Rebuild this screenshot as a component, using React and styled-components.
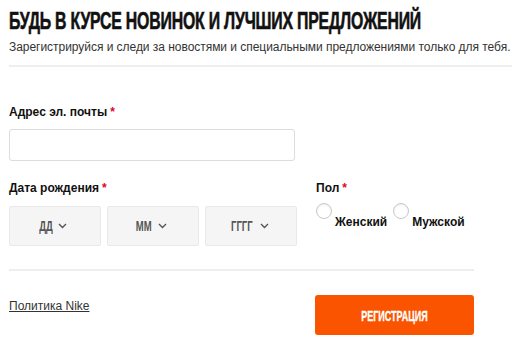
import React from "react";
import styled, { createGlobalStyle } from "styled-components";

const Global = createGlobalStyle`
  html, body { margin: 0; padding: 0; background: #fff; }
  body { font-family: "Liberation Sans", Arial, sans-serif; color: #111; }
  * { box-sizing: border-box; }
`;

const Page = styled.div`
  width: 520px;
  height: 344px;
  padding: 7px 8px 0 9px;
  overflow: hidden;
`;

const Title = styled.h1`
  margin: 0;
  height: 28px;
  font-family: "Liberation Sans", Arial, sans-serif;
  font-weight: 700;
  font-size: 24px;
  line-height: 28px;
  color: #111;
  white-space: nowrap;
  letter-spacing: -0.3px;
  -webkit-text-stroke: 0.6px #111;
`;

const Condensed = styled.span`
  display: inline-block;
  transform: scaleX(${(p) => p.$scale});
  transform-origin: ${(p) => p.$origin || "left center"};
`;

const Subtitle = styled.p`
  margin: 4px 0 0;
  font-size: 12px;
  line-height: 16px;
  color: #333;
  white-space: nowrap;
  letter-spacing: -0.04px;
`;

const Divider = styled.hr`
  border: 0;
  border-top: 2px solid #eeeeee;
  margin: ${(p) => p.$m};
  width: ${(p) => p.$w};
`;

const Label = styled.div`
  font-size: 12px;
  font-weight: 700;
  line-height: 16px;
  color: #111;
  margin-top: ${(p) => p.$mt || "0"};
  margin-bottom: ${(p) => p.$mb || "9px"};
`;

const Star = styled.span`
  color: #e4002b;
  font-weight: 700;
  margin-left: 3px;
`;

const Input = styled.input`
  display: block;
  width: 286px;
  height: 32px;
  border: 1px solid #dcdcdc;
  border-radius: 3px;
  background: #fff;
  outline: none;
`;

const Row = styled.div`
  display: flex;
  margin-top: 19px;
`;

const Col = styled.div`
  width: ${(p) => p.$w};
`;

const Selects = styled.div`
  display: flex;
  gap: 6px;
`;

const Select = styled.div`
  width: 92px;
  height: 40px;
  background: #f5f5f5;
  border: 1px solid #e9e9e9;
  border-radius: 2px;
  display: flex;
  align-items: center;
  justify-content: center;
  gap: 6px;
  color: #555;
  padding-right: 4px;
`;

const SelectText = styled.span`
  font-size: 14px;
  font-weight: 700;
  display: inline-block;
  transform: scaleX(0.68);
  margin: 0 -3px;
`;

const Radios = styled.div`
  display: flex;
  align-items: flex-start;
  gap: 6px;
  padding-top: 7px;
`;

const RadioItem = styled.label`
  display: flex;
  align-items: flex-start;
  gap: 3px;
`;

const Circle = styled.span`
  width: 16px;
  height: 16px;
  border-radius: 50%;
  border: 1px solid #c8c8c8;
  background: #fff;
  box-shadow: inset 0 1px 2px rgba(0, 0, 0, 0.08);
`;

const RadioText = styled.span`
  font-size: 12px;
  font-weight: 700;
  color: #111;
  margin-top: 12px;
  line-height: 14px;
`;

const Footer = styled.div`
  display: flex;
  align-items: flex-start;
  width: 465px;
`;

const Policy = styled.a`
  font-size: 12px;
  color: #333;
  text-decoration: underline;
  margin-top: 3px;
  line-height: 16px;
`;

const Button = styled.button`
  margin-left: auto;
  width: 159px;
  height: 40px;
  border: 0;
  border-radius: 3px;
  background: #fa5400;
  color: #fff;
  font-family: "Liberation Sans", Arial, sans-serif;
  font-size: 15px;
  font-weight: 700;
  cursor: pointer;
  padding: 0;
  -webkit-text-stroke: 0.3px #fff;
`;

const Chevron = () => (
  <svg width="9" height="6" viewBox="0 0 9 6" fill="none">
    <path d="M1 1l3.5 3.5L8 1" stroke="#555" strokeWidth="1.4" />
  </svg>
);

export default function App() {
  return (
    <Page>
      <Global />
      <Title>
        <Condensed $scale={0.66}>БУДЬ В КУРСЕ НОВИНОК И ЛУЧШИХ ПРЕДЛОЖЕНИЙ</Condensed>
      </Title>
      <Subtitle>
        Зарегистрируйся и следи за новостями и специальными предложениями только для тебя.
      </Subtitle>
      <Divider $m="10px 0 0" $w="503px" />
      <Label $mt="37px">
        Адрес эл. почты<Star>*</Star>
      </Label>
      <Input type="text" />
      <Row>
        <Col $w="307px">
          <Label $mb="10px">
            Дата рождения<Star>*</Star>
          </Label>
          <Selects>
            <Select>
              <SelectText>ДД</SelectText>
              <Chevron />
            </Select>
            <Select>
              <SelectText>ММ</SelectText>
              <Chevron />
            </Select>
            <Select>
              <SelectText>ГГГГ</SelectText>
              <Chevron />
            </Select>
          </Selects>
        </Col>
        <Col $w="160px">
          <Label $mb="0">
            Пол<Star>*</Star>
          </Label>
          <Radios>
            <RadioItem>
              <Circle />
              <RadioText>Женский</RadioText>
            </RadioItem>
            <RadioItem>
              <Circle />
              <RadioText>Мужской</RadioText>
            </RadioItem>
          </Radios>
        </Col>
      </Row>
      <Divider $m="23px 0 24px" $w="465px" />
      <Footer>
        <Policy href="#">Политика Nike</Policy>
        <Button>
          <Condensed $scale={0.6} $origin="center">РЕГИСТРАЦИЯ</Condensed>
        </Button>
      </Footer>
    </Page>
  );
}
